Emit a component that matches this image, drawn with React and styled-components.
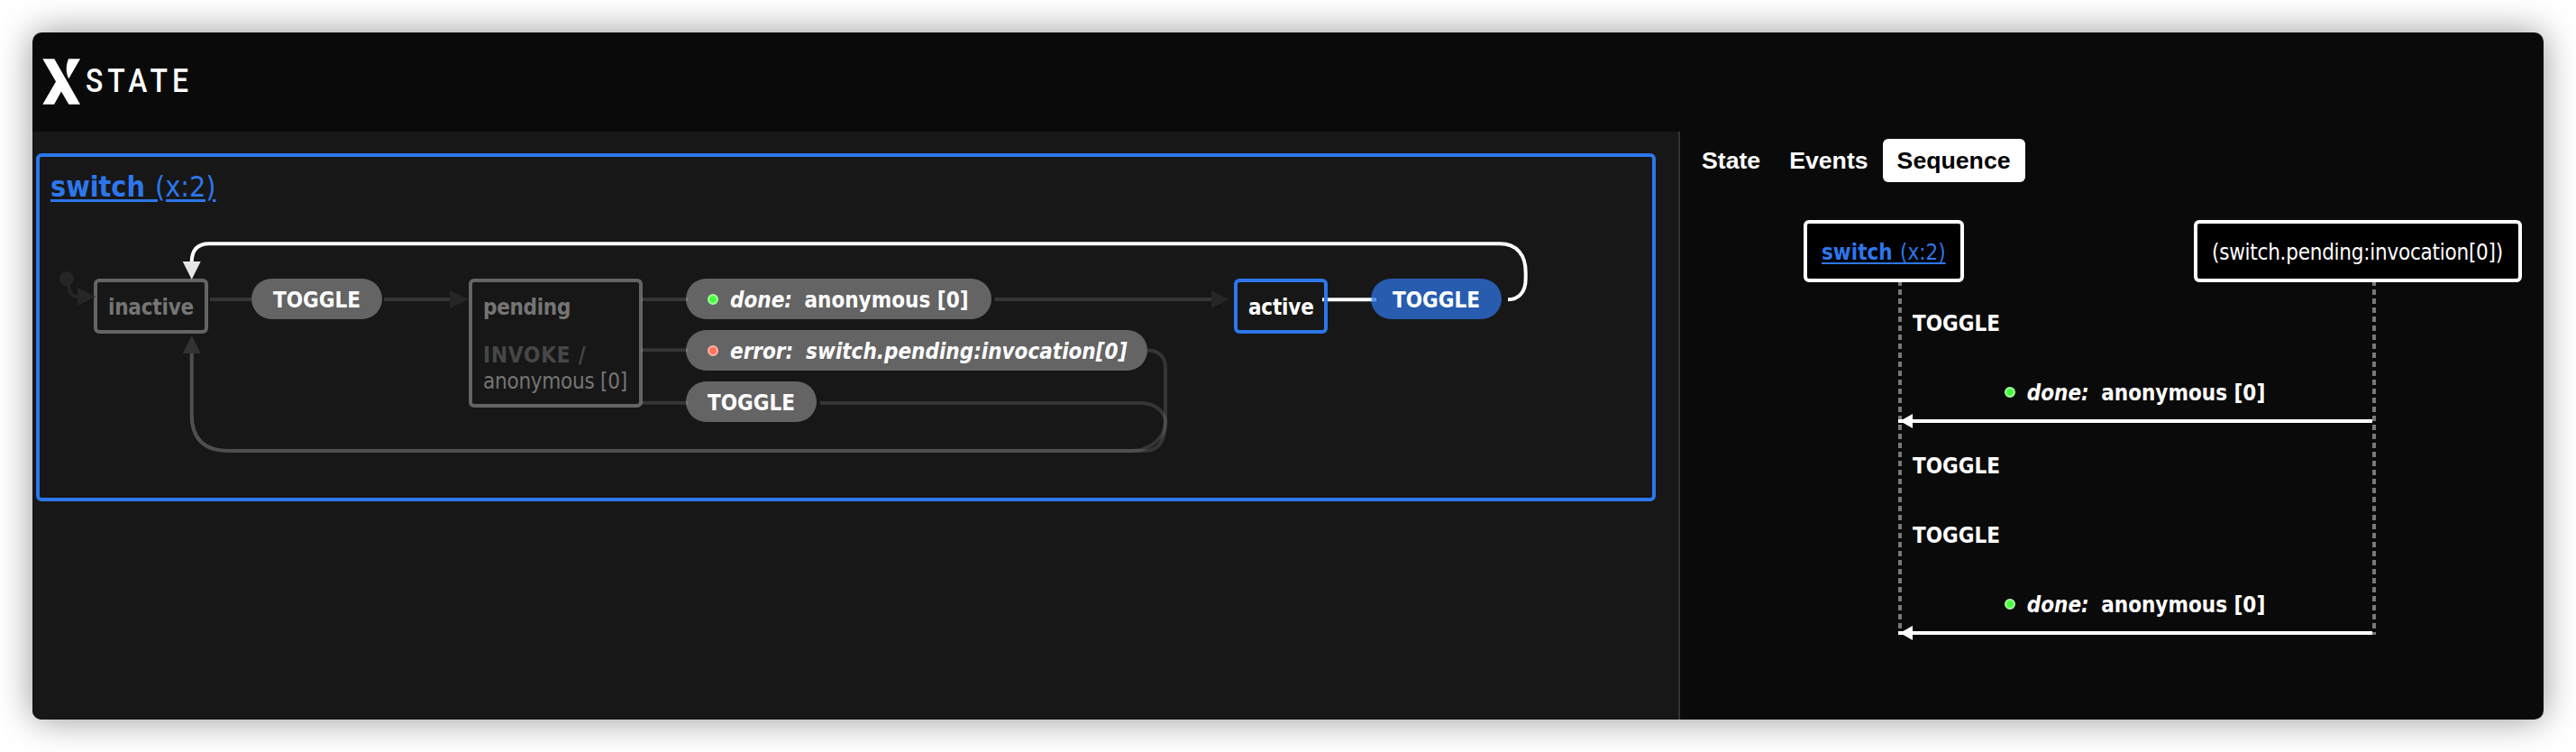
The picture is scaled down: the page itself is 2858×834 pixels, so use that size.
import React from "react";
import styled, { createGlobalStyle } from "styled-components";

const BLUE = "#2d77ed";
const UI_FONT = `"DejaVu Sans Condensed", Tahoma, "Noto Sans", sans-serif`;

const GlobalStyle = createGlobalStyle`
  *, *::before, *::after { box-sizing: border-box; }
  body { margin: 0; background: #fff; }
`;

const Page = styled.div`
  height: 834px;
  padding: 36px;
  overflow: hidden;
  font-family: ${UI_FONT};
  font-size: 24px;
  color: #fff;
`;

const AppWindow = styled.div`
  display: grid;
  grid-template: 110px 1fr / 1826px 1fr;
  height: 762px;
  border-radius: 10px;
  overflow: hidden;
  background: #0a0a0a;
`;

const WindowShadow = styled.div`
  border-radius: 10px;
  box-shadow: 0 0 38px rgba(0, 0, 0, 0.42);
`;

const Header = styled.header`
  grid-column: 1 / -1;
  display: flex;
  align-items: center;
  padding: 0 0 2px 11px;
`;

const Mark = styled.svg`
  display: block;
  width: 42px;
  height: 51px;
`;

const Wordmark = styled.span`
  margin: 0 0 1px 6px;
  font: 500 37px/44px Roboto, sans-serif;
  letter-spacing: 5.9px;
  transform: scaleX(0.86);
  transform-origin: left center;
`;

const CanvasPane = styled.main`
  background: #171717;
  padding: 24px 0 0 4px;
`;

const Machine = styled.section`
  position: relative;
  width: 1797px;
  height: 386px;
  border: 4px solid ${BLUE};
  border-radius: 6px;
  padding: 15px 12px;
`;

const MachineLink = styled.a`
  display: block;
  width: max-content;
  font-size: ${(p) => p.$size}px;
  line-height: ${(p) => p.$line}px;
  color: ${BLUE};
  white-space: pre;
  word-spacing: 0.06em;
  text-decoration: underline;
  text-decoration-thickness: ${(p) => p.$rule}px;
  text-underline-offset: ${(p) => p.$offset}px;
`;

const StateNode = styled.div`
  position: absolute;
  left: ${(p) => p.$x}px;
  top: ${(p) => p.$y}px;
  width: ${(p) => p.$w}px;
  height: ${(p) => p.$h}px;
  border: 4px solid ${(p) => (p.$active ? BLUE : "#646464")};
  border-radius: 6px;
  padding: 14px 0 0 12px;
  line-height: 29px;
  color: ${(p) => (p.$active ? "#fff" : "#757575")};
  white-space: nowrap;
`;

const StateName = styled.div`
  font-weight: 700;
  letter-spacing: ${(p) => p.$track || 0}px;
`;

const Invocation = styled.div`
  margin-top: 24px;
  letter-spacing: -0.25px;
`;

const InvokeTag = styled.div`
  font-weight: 700;
  color: #474747;
  letter-spacing: 0.85px;
`;

const EventPill = styled.div`
  position: absolute;
  left: ${(p) => p.$x}px;
  top: ${(p) => p.$y}px;
  width: ${(p) => p.$w}px;
  height: 45px;
  padding: 3px 0 0 24px;
  border-radius: 23px;
  background: ${(p) => (p.$active ? "#275cae" : "#646464")};
  line-height: 42px;
  display: flex;
`;

const EventText = styled.span`
  display: flex;
  align-items: center;
  font-weight: 700;
  white-space: pre;
`;

const Dot = styled.i`
  width: 12px;
  height: 12px;
  margin: -2px 13px 0 0;
  border-radius: 50%;
  border: 2px solid ${(p) => (p.$error ? "#ffb5a9" : "#a1ff9b")};
  background: ${(p) => (p.$error ? "#ff745f" : "#4bff42")};
`;

const Slanted = styled.em`
  font-style: italic;
  margin-right: ${(p) => p.$gap || 0}px;
`;

const Edges = styled.svg`
  position: absolute;
  left: 0;
  top: 0;
  width: 1789px;
  height: 378px;
  fill: none;
  stroke-width: 4;
`;

const SidePanel = styled.aside`
  border-left: 2px solid #333;
  padding: 8px 24px 0 8px;
`;

const Tabs = styled.nav`
  display: flex;
`;

const Tab = styled.button`
  height: 48px;
  padding: 0 16px;
  border: 0;
  border-radius: 6px;
  background: ${(p) => (p.$selected ? "#fff" : "transparent")};
  color: ${(p) => (p.$selected ? "#000" : "#fff")};
  font: 700 26.67px/47px "Liberation Sans", Arial, sans-serif;
`;

const Diagram = styled.div`
  position: relative;
  margin: 42px 0 0 129px;
`;

const Actors = styled.div`
  position: relative;
  display: flex;
  justify-content: space-between;
`;

const Actor = styled.div`
  width: ${(p) => p.$w}px;
  height: 69px;
  border: 4px solid #fff;
  border-radius: 6px;
  padding: 1px 0 0 ${(p) => p.$pad}px;
  background: #000;
  line-height: 62px;
  white-space: nowrap;
  letter-spacing: ${(p) => p.$track || 0}px;
`;

const Messages = styled.div`
  display: grid;
  grid-template-rows: 78px 80px 78px 76px 82px;
  padding-top: 7px;
  margin-left: 105px;
  width: 530px;
`;

const Message = styled.div`
  display: flex;
  align-items: center;
  justify-content: ${(p) => (p.$reply ? "center" : "flex-start")};
  padding: ${(p) => (p.$reply ? "0 5px 4px 0" : "0 0 0 16px")};
`;

const Lifelines = styled.svg`
  position: absolute;
  left: 0;
  top: 0;
  width: 797px;
  height: 480px;
  fill: none;
`;

function DoneEvent() {
  return (
    <EventText>
      <Dot />
      <Slanted $gap={13.5}>done:</Slanted>
      anonymous [0]
    </EventText>
  );
}

function MachineName({ big }) {
  return (
    <MachineLink $size={big ? 32 : 24} $line={big ? 36 : 62} $rule={big ? 3 : 2} $offset={3}>
      <b>switch</b> (x:2)
    </MachineLink>
  );
}

function Logo() {
  return (
    <>
      <Mark viewBox="47 64.5 42 51" fill="#fff">
        <path d="M47.3 64.8H60.3L89 115.3H76.3L68 101L60.1 115.3H47.3L62 90Z" />
        <path d="M76 64.8H89L76.3 86.8C73.2 82 72.6 72.5 76 64.8Z" />
      </Mark>
      <Wordmark>STATE</Wordmark>
    </>
  );
}

/* Transition lines, in window coordinates. */
function Transitions() {
  return (
    <Edges viewBox="44 174 1789 378">
      <circle cx="74" cy="309" r="8" fill="#262626" />
      <path d="M75.5 311C75.5 322 78 329.2 87 329.2" stroke="#262626" />
      <path d="M86 319L106 329L86 339Z" fill="#262626" />
      <g stroke="#fff" strokeOpacity="0.13">
        <path d="M233 332H279M426 332H499" />
        <path d="M711.5 332H763.5M711.5 388.3H763.5M711.5 446.8H763.5" />
        <path d="M1103.5 332H1344" />
        <path d="M1273 388.4C1286 388.4 1293 396 1293 408V468C1293 488 1286 500 1270 500H254Q212.7 500 212.7 460V392" />
        <path d="M910 447H1267C1281 447 1293 457 1293 468C1293 484 1278 500 1254 500H254Q212.7 500 212.7 460V392" />
      </g>
      <path d="M202.7 392L212.7 372L222.7 392Z" fill="#323232" />
      <path d="M499 322L520 332L499 342Z" fill="#262626" />
      <path d="M1344 322L1363.5 332L1344 342Z" fill="#262626" />
      <path d="M1473 332.3H1522M1467 332.3H1469" stroke="#fff" />
      <path d="M1521.5 332.3H1527" stroke="#5c95f4" />
      <path
        d="M1673 332.3C1685 332.3 1692.7 324 1692.7 309V302C1692.7 283 1683 270.3 1664 270.3H232Q212.7 270.3 212.7 291"
        stroke="#fff"
      />
      <path d="M202.7 290L212.7 310L222.7 290Z" fill="#e6e6e6" />
    </Edges>
  );
}

function Chart() {
  return (
    <Machine>
      <MachineName big />
      <StateNode $x={60} $y={135} $w={127} $h={61}>
        <StateName $track={-0.2}>inactive</StateName>
      </StateNode>
      <EventPill $x={235} $y={135} $w={145}>
        <EventText>TOGGLE</EventText>
      </EventPill>
      <StateNode $x={476} $y={135} $w={193} $h={143}>
        <StateName $track={-0.3}>pending</StateName>
        <Invocation>
          <InvokeTag>INVOKE /</InvokeTag>
          anonymous [0]
        </Invocation>
      </StateNode>
      <EventPill $x={717} $y={135} $w={339}>
        <DoneEvent />
      </EventPill>
      <EventPill $x={717} $y={192} $w={512}>
        <EventText>
          <Dot $error />
          <Slanted $gap={14}>error:</Slanted>
          <Slanted>switch.pending:invocation[0]</Slanted>
        </EventText>
      </EventPill>
      <EventPill $x={717} $y={249} $w={145}>
        <EventText>TOGGLE</EventText>
      </EventPill>
      <StateNode $x={1325} $y={135} $w={104} $h={61} $active>
        <StateName $track={-0.2}>active</StateName>
      </StateNode>
      <EventPill $x={1477} $y={135} $w={145} $active>
        <EventText>TOGGLE</EventText>
      </EventPill>
      <Transitions />
    </Machine>
  );
}

function Sequence() {
  return (
    <Diagram>
      <Lifelines viewBox="2001 244 797 480">
        <path d="M2108 311V703M2634 311V704" stroke="#787878" strokeWidth="4" strokeDasharray="6 4" />
        <path d="M2106 467H2632M2106 702H2632" stroke="#fff" strokeWidth="4" />
        <path d="M2108 467L2122 459V475ZM2108 702L2122 694V710Z" fill="#fff" />
      </Lifelines>
      <Actors>
        <Actor $w={178} $pad={16}>
          <MachineName />
        </Actor>
        <Actor $w={364} $pad={16} $track={-0.25}>
          (switch.pending:invocation[0])
        </Actor>
      </Actors>
      <Messages>
        <Message><EventText>TOGGLE</EventText></Message>
        <Message $reply><DoneEvent /></Message>
        <Message><EventText>TOGGLE</EventText></Message>
        <Message><EventText>TOGGLE</EventText></Message>
        <Message $reply><DoneEvent /></Message>
      </Messages>
    </Diagram>
  );
}

export default function App() {
  return (
    <>
      <GlobalStyle />
      <Page>
        <WindowShadow>
          <AppWindow>
            <Header>
              <Logo />
            </Header>
            <CanvasPane>
              <Chart />
            </CanvasPane>
            <SidePanel>
              <Tabs>
                <Tab>State</Tab>
                <Tab>Events</Tab>
                <Tab $selected>Sequence</Tab>
              </Tabs>
              <Sequence />
            </SidePanel>
          </AppWindow>
        </WindowShadow>
      </Page>
    </>
  );
}
